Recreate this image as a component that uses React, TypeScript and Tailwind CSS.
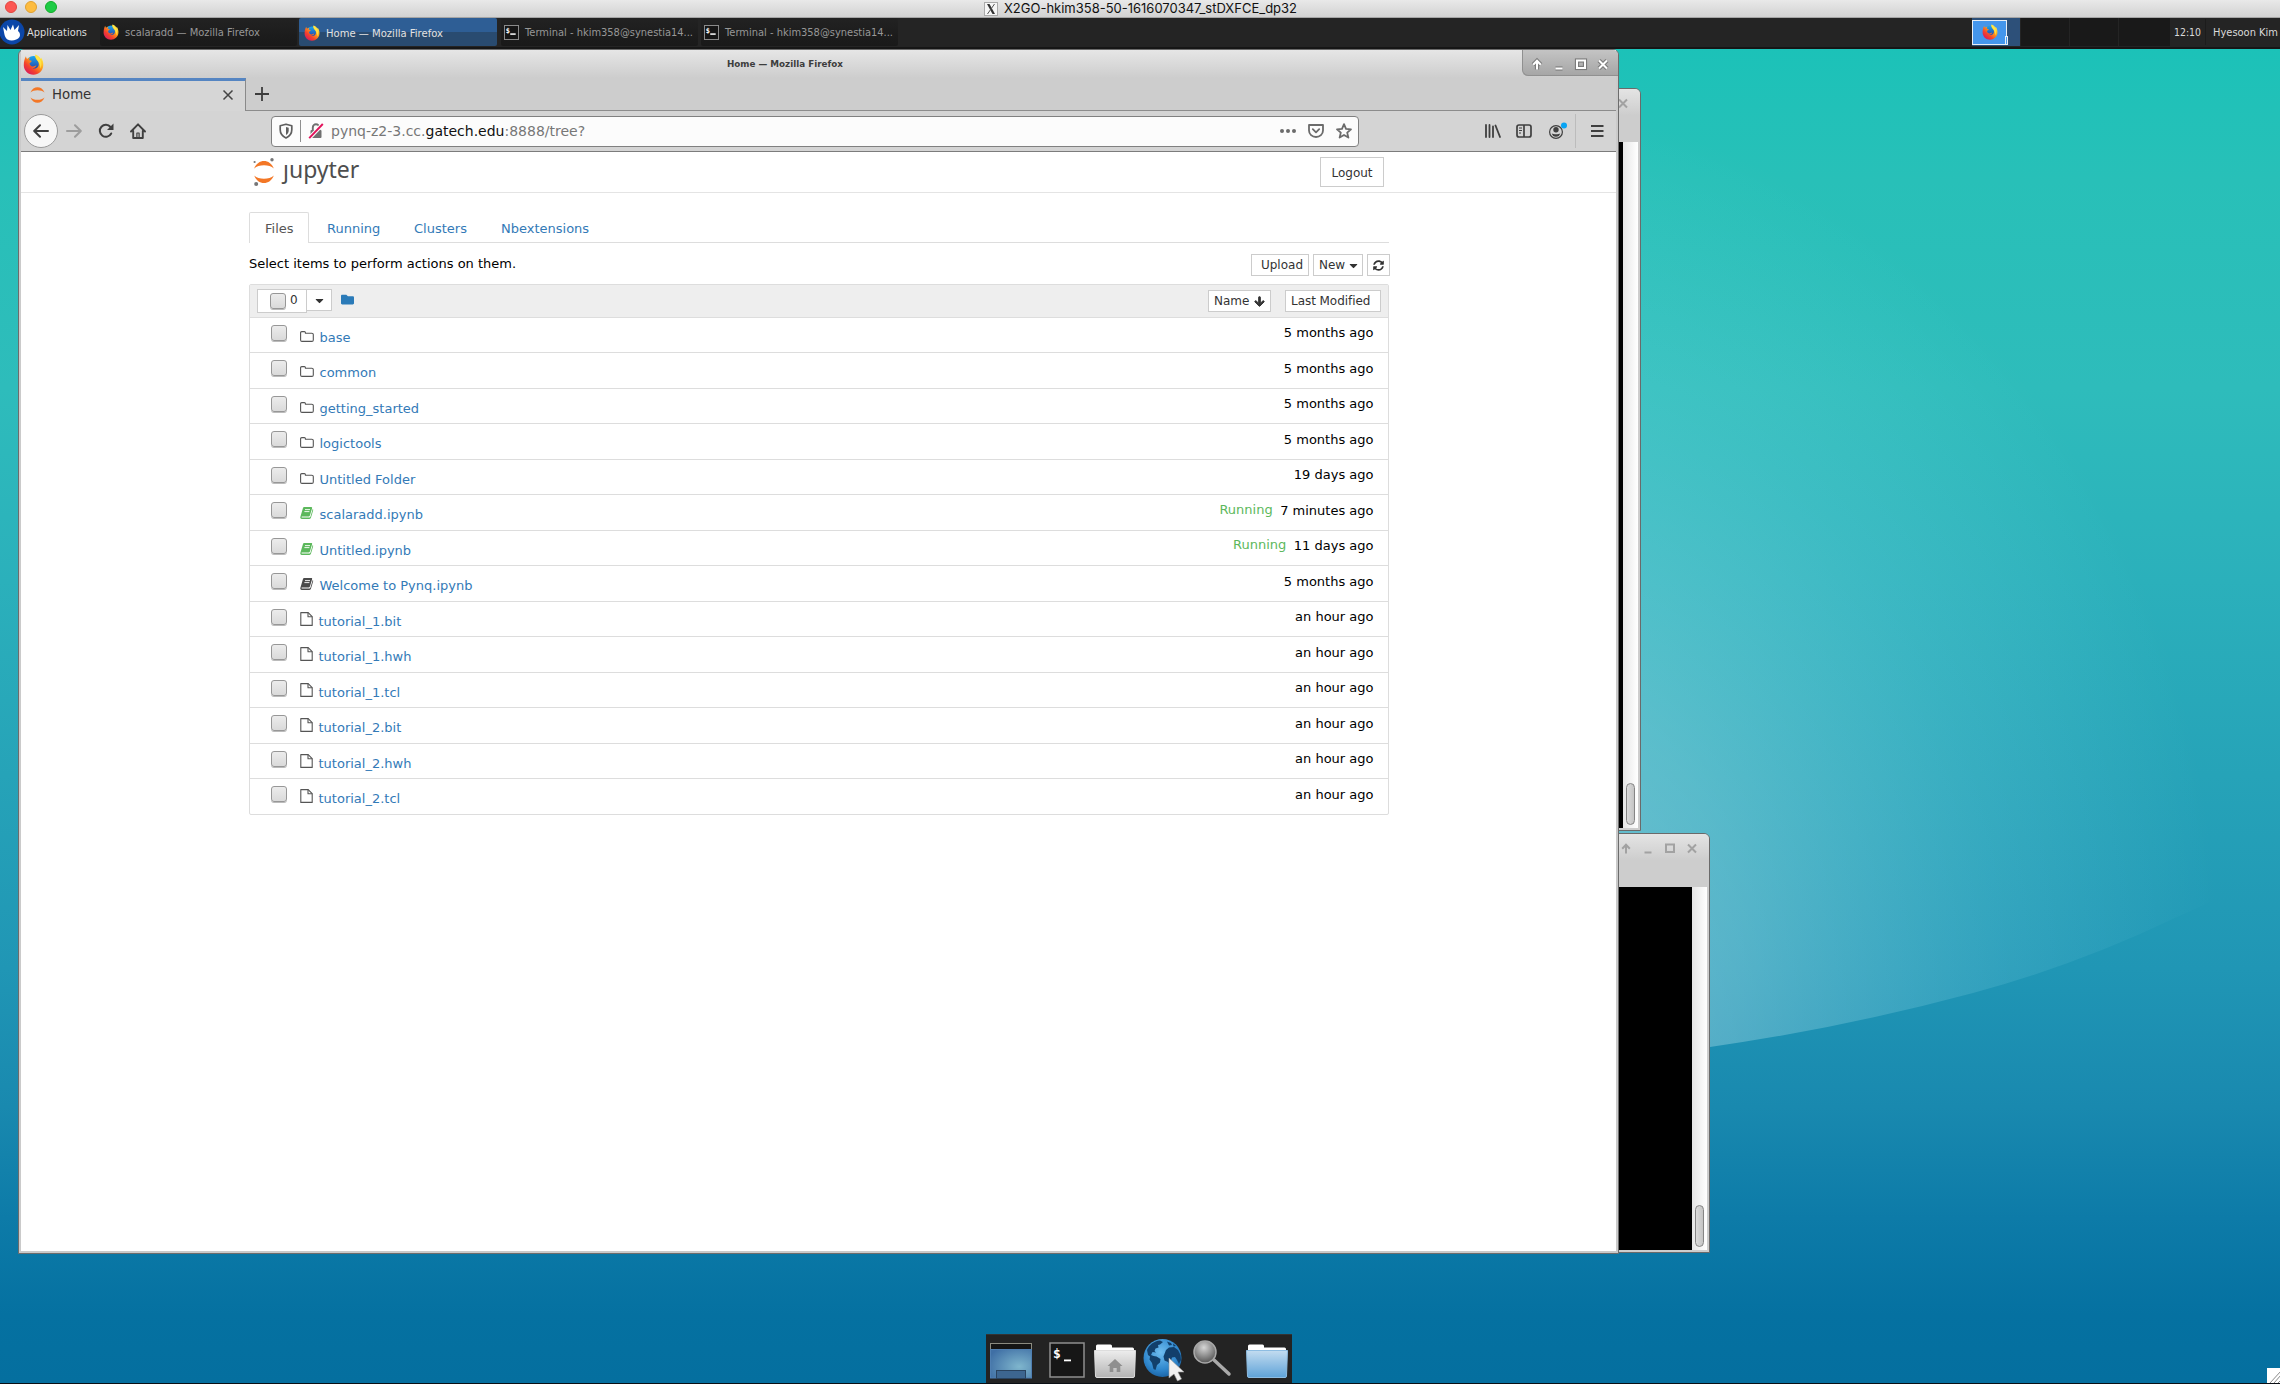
import React from "react";
import { FaFolder, FaArrowDown, FaSyncAlt, FaCaretDown } from "react-icons/fa";

const DEJAVU = "font-['DejaVu_Sans',sans-serif]";

function Firefox({ size }: { size: number }) {
  return (
    <svg width={size} height={size} viewBox="0 0 32 32" className="block shrink-0">
      <defs>
        <linearGradient id="ffBody" x1="0.85" y1="0.1" x2="0.15" y2="0.95">
          <stop offset="0" stopColor="#fff04a" />
          <stop offset="0.35" stopColor="#ffa318" />
          <stop offset="0.68" stopColor="#f4432c" />
          <stop offset="1" stopColor="#d8175f" />
        </linearGradient>
        <linearGradient id="ffGlobe" x1="0.5" y1="0" x2="0.5" y2="1">
          <stop offset="0" stopColor="#19a8f0" />
          <stop offset="1" stopColor="#2a3aa0" />
        </linearGradient>
      </defs>
      <circle cx="16" cy="14" r="11" fill="url(#ffGlobe)" />
      <path
        d="M4.5 3.500c.2 2 .8 3 1.600 4C7.500 6.300 9 5.600 11 5.500c-1.300 1.500-1.700 3-1.500 4 1.400.2 3.500.3 3.800 1.200-.3 1.300-2 2.200-3.300 3.500.1 3 2.500 5 5.500 4.800 2-.1 3.600-1.700 5-1.300-1.200 2.500-3.500 3.800-6 4 5.500 1.500 10-2 9.500-7-.2-2.500-1.500-4-2.500-5C19.500 7 17.800 4 18.800.8c4 1.300 6.500 3.700 8.400 6.700.3-.6.4-1.200.3-2 2.800 4 3.800 8.500 3.300 12.700C30 26 23.800 31.500 16 31.500 7.800 31.500 1.200 25 1.200 17c0-5 1.300-10.500 3.300-13.500z"
        fill="url(#ffBody)"
      />
      <path d="M19 1.500c4 2.500 8 6.500 9 12 .6 3.800-.5 7-2 9 .8-5-.8-9-3.500-12C20.300 8 18.300 5 19 1.500z" fill="#ffe94a" opacity=".85" />
    </svg>
  );
}

function JupyterMark({ w, h, moons }: { w: number; h: number; moons?: boolean }) {
  return (
    <svg width={w} height={h} viewBox="0 0 22 28" className="block shrink-0">
      <path d="M1.200 10.500C3 5.500 7 3 11 3s8 2.500 9.800 7.500C18.500 8.300 15 7.200 11 7.200S3.500 8.300 1.200 10.500z" fill="#f37726" />
      <path d="M1.200 17.500C3 22.500 7 25 11 25s8-2.500 9.800-7.500C18.500 19.700 15 20.800 11 20.800S3.500 19.700 1.200 17.500z" fill="#f37726" />
      {moons && (
        <g fill="#767677">
          <circle cx="19" cy="1.800" r="1.700" />
          <circle cx="1.600" cy="4" r="1.100" />
          <circle cx="3.200" cy="26" r="2" />
        </g>
      )}
    </svg>
  );
}

function TerminalGlyph({ size }: { size: number }) {
  return (
    <svg width={size} height={size} viewBox="0 0 36 36" className="block shrink-0">
      <rect x="1" y="1" width="34" height="34" fill="#161616" stroke="#8f8f8f" strokeWidth={size > 20 ? 1.500 : 2.600} />
      <text x="4" y={size > 20 ? 16 : 18} fontSize={size > 20 ? 13 : 17} fontWeight="bold" fill="#fff" fontFamily="DejaVu Sans Mono, monospace">
        $
      </text>
      <rect x="15" y={size > 20 ? 17.500 : 20} width={size > 20 ? 7 : 13} height={size > 20 ? 1.800 : 3.600} fill="#fff" />
    </svg>
  );
}

function TaskText({ children, width, className = "" }: { children: string; width: number; className?: string }) {
  return (
    <svg width={width} height="16" className={`block shrink-0 overflow-visible ${className}`}>
      <text x="0" y="11.500" textLength={width} lengthAdjust="spacingAndGlyphs" fontSize="10" fill="currentColor" fontFamily="DejaVu Sans, sans-serif">
        {children}
      </text>
    </svg>
  );
}

function WindowButtons({ active }: { active?: boolean }) {
  const c = active ? "#fff" : "#a2a2a2";
  const o = active ? "#7b7b7b" : "transparent";
  return (
    <svg width="88" height="24" viewBox="0 0 88 24" className="block shrink-0" fill="none">
      {[
        { s: o, w: 4.200 },
        { s: c, w: 2 },
      ].map((p, i) => (
        <g key={i} stroke={p.s} strokeWidth={p.w}>
          <path d="M11 17.500v-8M7.200 12.800l3.800-4 3.800 4" />
          <path d="M29.500 16.500h7" />
          <rect x="51" y="8.500" width="8" height="7.500" />
          <path d="M73 8.500l8 8M81 8.500l-8 8" />
        </g>
      ))}
    </svg>
  );
}

function ThumbBar({ className = "" }: { className?: string }) {
  return (
    <div className={`flex w-[15px] items-end justify-center bg-gradient-to-r from-[#e6e6e6] to-white pb-[3px] ${className}`}>
      <div className="h-[42px] w-[9px] rounded-full border border-[#858585] bg-gradient-to-r from-[#dcdcdc] to-[#c4c4c4]" />
    </div>
  );
}

function TerminalWindow({ className }: { className: string }) {
  return (
    <div className={`absolute flex flex-col overflow-hidden rounded-t-[6px] border border-[#6a6a6a] bg-[#cdcdcd] ${className}`}>
      <div className="flex h-[53px] shrink-0 justify-end bg-gradient-to-b from-[#e4e4e4] to-[#cdcdcd] to-50% pt-[2px] pr-[6px]">
        <WindowButtons />
      </div>
      <div className="mr-[2px] mb-[2px] flex flex-1">
        <div className="flex-1 bg-black" />
        <ThumbBar />
      </div>
    </div>
  );
}

function Wallpaper() {
  return (
    <svg width="2280" height="1384" viewBox="0 0 2280 1384" className="absolute inset-0">
      <defs>
        <linearGradient id="sky" x1="0" y1="0" x2="0" y2="1">
          <stop offset="0.03" stopColor="#1bc2b8" />
          <stop offset="0.13" stopColor="#28c0b8" />
          <stop offset="0.28" stopColor="#2ebcbb" />
          <stop offset="0.42" stopColor="#2bb0bb" />
          <stop offset="0.56" stopColor="#26a3b8" />
          <stop offset="0.7" stopColor="#2096b5" />
          <stop offset="0.8" stopColor="#1989af" />
          <stop offset="0.88" stopColor="#0d7ba8" />
          <stop offset="0.95" stopColor="#0571a1" />
          <stop offset="1" stopColor="#056f9f" />
        </linearGradient>
        <radialGradient id="glow" gradientUnits="userSpaceOnUse" cx="0" cy="0" r="1" gradientTransform="translate(1480 960) scale(740 860)">
          <stop offset="0" stopColor="#fff" stopOpacity=".4" />
          <stop offset="0.35" stopColor="#e6ffff" stopOpacity=".27" />
          <stop offset="0.7" stopColor="#b8f8ff" stopOpacity=".12" />
          <stop offset="1" stopColor="#b8f8ff" stopOpacity="0" />
        </radialGradient>
      </defs>
      <rect width="2280" height="1384" fill="url(#sky)" />
      <path d="M0 49H2280V862Q2230 895 2177 917Q2077 965 1973 993Q1843 1028 1710 1047Q1400 1085 0 1085z" fill="url(#glow)" />
    </svg>
  );
}

function TaskButton({ icon, label, width, active, className = "" }: { icon: React.ReactNode; label: string; width: number; active?: boolean; className?: string }) {
  return (
    <div
      className={`flex h-[28px] shrink-0 items-center gap-[6px] rounded-[2px] ${
        active
          ? "w-[198px] bg-gradient-to-b from-[#2e5e95] from-50% to-[#294b70] to-50% pt-px pl-[5px] text-[#e2e2e2]"
          : "w-[197px] bg-gradient-to-b from-[#222] to-[#191919] pl-[3px] text-[#979797]"
      } ${className}`}
    >
      {icon}
      <TaskText width={width}>{label}</TaskText>
    </div>
  );
}

function TopPanel() {
  return (
    <div className="flex h-[31px] items-center border-b-[2px] border-[#161616] bg-[#242424] pb-[1px]">
      <svg width="25" height="26" viewBox="0 0 25 26" className="block shrink-0">
        <circle cx="12" cy="13" r="12.500" fill="#0b46a8" />
        <path d="M3 8l4 4 .5-6 3 5L13 5.500l1.500 5.500L19 6l-1 6c2 1.500 2.500 4 1.500 6-2 3-8 4.500-12 2.500C4 18 4.500 14 3 8z" fill="#fff" />
      </svg>
      <div className="w-[75px] shrink-0 pl-[2px] text-[#dedede]">
        <TaskText width={60}>Applications</TaskText>
      </div>
      <TaskButton icon={<Firefox size={16} />} label="scalaradd — Mozilla Firefox" width={135} />
      <TaskButton className="ml-[2px]" active icon={<Firefox size={16} />} label="Home — Mozilla Firefox" width={117} />
      <TaskButton className="ml-[4px]" icon={<TerminalGlyph size={15} />} label="Terminal - hkim358@synestia14..." width={168} />
      <TaskButton className="ml-[3px]" icon={<TerminalGlyph size={15} />} label="Terminal - hkim358@synestia14..." width={168} />
      <div className="ml-auto flex h-[28px] shrink-0 items-center">
        <div className="flex h-[28px] w-[48px] items-center bg-[#2d5079]">
          <div className="flex h-[25px] w-[35px] items-center justify-center border border-[#e8eef5] bg-[#4496ec]">
            <Firefox size={16} />
          </div>
          <div className="mt-[16px] -ml-[2px] h-[9px] w-[3px] border border-[#e8eef5] bg-[#4496ec]" />
        </div>
        <div className="ml-px h-[28px] w-[48px] bg-[#191919]" />
        <div className="ml-px h-[28px] w-[48px] bg-[#191919]" />
        <div className="ml-px h-[28px] w-[51px] bg-[#191919]" />
        <TaskText className="ml-[4px] text-[#dadada]" width={27}>12:10</TaskText>
        <div className="ml-[4px] h-[26px] w-px bg-[#1c1c1c]" />
        <TaskText className="ml-[7px] mr-[2px] text-[#dadada]" width={65}>Hyesoon Kim</TaskText>
      </div>
    </div>
  );
}

function BrowserTabs() {
  return (
    <div className="flex h-[33px] shrink-0 bg-[#cdcdcd]">
      <div className="flex w-[225px] items-center border-t-[3px] border-r border-t-[#5585c2] border-r-[#8a8a8a] bg-[#d6d6d6] pr-[11px] pb-[2px] pl-[8px] text-[13.3px] text-[#333]">
        <JupyterMark w={17} h={20} />
        <span className="ml-[6px]">Home</span>
        <svg width="12" height="12" viewBox="0 0 12 12" className="ml-auto" stroke="#444" strokeWidth="1.500">
          <path d="M1.500 1.500l9 9M10.500 1.500l-9 9" />
        </svg>
      </div>
      <div className="flex flex-1 items-center border-b border-[#8c8c8c] pl-[9px]">
        <svg width="14" height="14" viewBox="0 0 14 14" stroke="#3c3c3c" strokeWidth="1.800">
          <path d="M7 0v14M0 7h14" />
        </svg>
      </div>
    </div>
  );
}

function NavBar() {
  return (
    <div className="flex h-[41px] shrink-0 items-center border-b border-[#7c7c7c] bg-[#d4d4d4]">
      <div className="ml-[3px] flex size-[34px] items-center justify-center rounded-full border border-[#9a9a9a] bg-[#f7f7f7]">
        <svg width="16" height="14" viewBox="0 0 16 14" fill="none" stroke="#3f3f3f" strokeWidth="2" strokeLinecap="round" strokeLinejoin="round">
          <path d="M15 7H1.500M7 1.200L1.200 7 7 12.800" />
        </svg>
      </div>
      <svg width="16" height="14" viewBox="0 0 16 14" className="ml-[8px]" fill="none" stroke="#9d9d9d" strokeWidth="2" strokeLinecap="round" strokeLinejoin="round">
        <path d="M1 7h13.500M9 1.200L14.800 7 9 12.800" />
      </svg>
      <svg width="16" height="16" viewBox="0 0 16 16" className="ml-[16px]" fill="none" stroke="#3f3f3f" strokeWidth="2">
        <path d="M13.200 10.500A6 6 0 1 1 12.500 4" strokeLinecap="round" />
        <path d="M15.500 0.500v6.500h-6.500z" fill="#3f3f3f" stroke="none" />
      </svg>
      <svg width="16" height="16" viewBox="0 0 16 16" className="ml-[16px]" fill="none" stroke="#3f3f3f" strokeWidth="1.900" strokeLinejoin="round" strokeLinecap="round">
        <path d="M1 8.500L8 1.300l7 7.200M3.200 8v7h9.600V8" />
        <path d="M6.900 14.500V10h2.200v4.500z" strokeWidth="1.200" />
      </svg>
      <div className="ml-[125px] flex h-[31px] w-[1088px] items-center rounded-[4px] border border-[#808080] bg-[#fcfcfc] pr-[6px] pl-[7px]">
        <svg width="14" height="16" viewBox="0 0 14 16" fill="none" stroke="#5f5f5f" strokeWidth="1.700">
          <path d="M7 1.200l5.800 1.500v4c0 4-2.300 6.500-5.800 8.300-3.500-1.800-5.800-4.300-5.800-8.300v-4z" strokeLinejoin="round" />
          <path d="M7 4v8c1.500-1 2.700-2.300 2.700-4.800V4.700z" fill="#5f5f5f" stroke="none" />
        </svg>
        <div className="ml-[7px] h-[22px] w-px bg-[#8f8f8f]" />
        <svg width="16" height="16" viewBox="0 0 16 16" className="ml-[7px]" fill="none">
          <rect x="2.500" y="7" width="11" height="8" rx="1" fill="#707070" />
          <path d="M4.800 7V4.500a3.200 3.200 0 0 1 6.400 0V7" stroke="#707070" strokeWidth="1.900" />
          <path d="M1.200 15.200L14.800 1" stroke="#fcfcfc" strokeWidth="4" />
          <path d="M1.200 15.200L14.800 1" stroke="#e2125a" strokeWidth="1.900" />
        </svg>
        <span className="ml-[7px] text-[14px] whitespace-pre text-[#777]">
          pynq-z2-3.cc.<span className="text-[#111]">gatech.edu</span>:8888/tree?
        </span>
        <svg width="16" height="4" viewBox="0 0 16 4" className="ml-auto" fill="#6b6b6b">
          <circle cx="2" cy="2" r="2" />
          <circle cx="8" cy="2" r="2" />
          <circle cx="14" cy="2" r="2" />
        </svg>
        <svg width="16" height="14" viewBox="0 0 16 14" className="ml-[12px]" fill="none" stroke="#6b6b6b" strokeWidth="1.800" strokeLinecap="round" strokeLinejoin="round">
          <path d="M1 1h14v5.500a7 6.500 0 0 1-14 0z" />
          <path d="M4.800 5.200L8 8.300l3.200-3.100" />
        </svg>
        <svg width="16" height="16" viewBox="0 0 16 16" className="ml-[12px]" fill="none" stroke="#6b6b6b" strokeWidth="1.800" strokeLinejoin="round">
          <path d="M8 1.200l2 4.700 5 .4-3.800 3.300 1.200 5L8 11.900l-4.400 2.700 1.200-5L1 6.300l5-.4z" />
        </svg>
      </div>
      <svg width="16" height="14" viewBox="0 0 16 14" className="ml-[126px]" stroke="#3f3f3f" strokeWidth="1.800" strokeLinecap="round">
        <path d="M1 1v12M4.500 1v12M8 2.500V13M10.500 1.500L15 13" />
      </svg>
      <svg width="16" height="14" viewBox="0 0 16 14" className="ml-[15px]" fill="none" stroke="#3f3f3f" strokeWidth="1.700">
        <rect x="1" y="1" width="14" height="12" rx="2" />
        <path d="M8 1v12" />
        <path d="M3 4h3M3 6.500h3M3 9h2" strokeWidth="1" />
      </svg>
      <svg width="19" height="18" viewBox="0 0 19 18" className="ml-[17px]" fill="none">
        <circle cx="7" cy="10" r="6.400" stroke="#3f3f3f" strokeWidth="1.200" />
        <circle cx="7" cy="7.800" r="2.700" fill="#3f3f3f" />
        <path d="M2.800 11.500c1.600.9 6.800.9 8.400 0-.5 2-2 3.300-4.200 3.300s-3.700-1.300-4.200-3.300z" fill="#3f3f3f" />
        <circle cx="15" cy="3.500" r="3" fill="#08a4f4" />
      </svg>
      <div className="ml-[7px] h-[34px] w-px bg-[#bcbcbc]" />
      <svg width="13" height="12" viewBox="0 0 13 12" className="ml-[15px]" stroke="#3f3f3f" strokeWidth="1.800">
        <path d="M0 1h12.500M0 6h12.500M0 11h12.500" />
      </svg>
    </div>
  );
}

const btn = "flex items-center border border-[#ccc] bg-white text-[12px] text-[#333]";

function Checkbox() {
  return <div className="size-[16px] shrink-0 rounded-[3px] border border-[#979797] bg-gradient-to-b from-[#ececec] to-[#dadada] shadow-[0_1px_0_#bbb]" />;
}

function FolderOutline() {
  return (
    <svg width="14" height="11" viewBox="0 0 14 11" className="mt-[13px] block" fill="none" stroke="#555" strokeWidth="1.100" strokeLinejoin="round">
      <path d="M.6 9V1.800C.6 1 1 .6 1.800.6h2.600c.7 0 1 .4 1 1v.6h6.400c.8 0 1.500.5 1.500 1.300V9c0 .8-.5 1.400-1.400 1.400H2C1.100 10.400.6 9.800.6 9z" />
    </svg>
  );
}

function NotebookGlyph({ green }: { green?: boolean }) {
  return (
    <svg width="14" height="12" viewBox="0 0 14 12" className="mt-[12px] block" fill={green ? "#5cb85c" : "#4a4a4a"}>
      <path d="M4.300 0h6.900c.8 0 1.100.5.900 1.200L9.900 8.600c-.2.600-.7.900-1.300.9H2c-.5 0-.6.600-.2.900h7.500c.6 0 1-.3 1.200-.9L12.700 2c.5.300.6.800.4 1.400l-2.100 7.200c-.2.800-.8 1.300-1.600 1.300H1.800C.6 11.900 0 11 .4 9.800L2.900 1.300C3.200.4 3.600 0 4.300 0z" />
      <path d="M5 2.600h5M4.400 4.600h5" stroke="#fff" strokeWidth=".9" />
    </svg>
  );
}

function FileOutline() {
  return (
    <svg width="13" height="14" viewBox="0 0 13 14" className="mt-[10px] block" fill="none" stroke="#555" strokeWidth="1.100" strokeLinejoin="round">
      <path d="M.8.6h7.400l4 4v8.800H.8z" />
      <path d="M8 .6v4.200h4.200" />
    </svg>
  );
}

type Kind = "folder" | "live" | "notebook" | "file";
const items: { name: string; kind: Kind; time: string }[] = [
  { name: "base", kind: "folder", time: "5 months ago" },
  { name: "common", kind: "folder", time: "5 months ago" },
  { name: "getting_started", kind: "folder", time: "5 months ago" },
  { name: "logictools", kind: "folder", time: "5 months ago" },
  { name: "Untitled Folder", kind: "folder", time: "19 days ago" },
  { name: "scalaradd.ipynb", kind: "live", time: "7 minutes ago" },
  { name: "Untitled.ipynb", kind: "live", time: "11 days ago" },
  { name: "Welcome to Pynq.ipynb", kind: "notebook", time: "5 months ago" },
  { name: "tutorial_1.bit", kind: "file", time: "an hour ago" },
  { name: "tutorial_1.hwh", kind: "file", time: "an hour ago" },
  { name: "tutorial_1.tcl", kind: "file", time: "an hour ago" },
  { name: "tutorial_2.bit", kind: "file", time: "an hour ago" },
  { name: "tutorial_2.hwh", kind: "file", time: "an hour ago" },
  { name: "tutorial_2.tcl", kind: "file", time: "an hour ago" },
];

function FileList() {
  return (
    <div className="mt-[7px] w-[1140px] rounded-[2px] border border-[#ddd] text-[13px] leading-[17px]">
      <div className="flex h-[33px] items-start border-b border-[#ddd] bg-[#eee] pt-[4px] pl-[7px]">
        <div className={`${btn} h-[24px] w-[50px] pl-[12px]`}>
          <Checkbox />
          <span className="ml-[4px] mb-[2px]">0</span>
        </div>
        <div className={`${btn} -ml-px h-[22px] w-[26px] justify-center`}>
          <FaCaretDown size={13} />
        </div>
        <FaFolder size={13} color="#2a7ab8" className="mt-[4px] ml-[9px]" />
        <div className={`${btn} mt-px ml-auto h-[22px] w-[63px] justify-between px-[5px]`}>
          Name
          <FaArrowDown size={11} stroke="currentColor" strokeWidth={45} />
        </div>
        <div className={`${btn} mt-px mr-[7px] ml-[14px] h-[22px] w-[96px] pl-[5px] tracking-[-0.05px]`}>Last Modified</div>
      </div>
      {items.map((it, i) => {
        const last = i === items.length - 1;
        return (
          <div key={it.name} className={`flex items-start pr-[14.500px] pl-[21px] ${i % 2 && !last ? "h-[36px]" : "h-[35px]"} ${last ? "" : "border-b border-[#ddd]"}`}>
            <div className={i % 2 ? "mt-[7px]" : "mt-[6.500px]"}>
              <Checkbox />
            </div>
            <div className="ml-[13px] w-[14px]">
              {it.kind === "folder" && <FolderOutline />}
              {it.kind === "live" && <NotebookGlyph green />}
              {it.kind === "notebook" && <NotebookGlyph />}
              {it.kind === "file" && <FileOutline />}
            </div>
            <a className={`mt-[11px] text-[#337ab7] ${it.kind === "file" ? "ml-[4.500px]" : "ml-[5.500px]"}`}>{it.name}</a>
            {it.kind === "live" && <span className={`ml-auto text-[#5cb85c] ${i % 2 ? "mt-[6px]" : "mt-[5px]"}`}>Running</span>}
            <span className={`text-black ${i % 2 ? "mt-[7px]" : "mt-[6px]"} ${it.kind === "live" ? "ml-[7.500px]" : "ml-auto"}`}>{it.time}</span>
          </div>
        );
      })}
    </div>
  );
}

function JupyterPage() {
  return (
    <div className="flex flex-1 flex-col bg-white">
      <div className="flex h-[41px] shrink-0 items-start border-b border-[#e4e4e4] pl-[232px]">
        <div className="mt-[6px]">
          <JupyterMark w={22} h={28} moons />
        </div>
        <div className="relative mt-[2px] ml-[8px] font-['Noto_Sans',sans-serif] text-[23px] leading-[30px] text-[#4e4e4e]">
          jupyter
          <span className="absolute top-0 left-0 h-[10px] w-[6px] bg-white" />
        </div>
        <div className={`${btn} mt-[5px] mr-[232px] ml-auto h-[30px] w-[64px] justify-center pt-px`}>Logout</div>
      </div>
      <div className="ml-[228px] w-[1141px]">
        <div className="mt-[19px] flex h-[31px] w-[1140px] items-stretch text-[13px] leading-[33px] text-[#337ab7]">
          <div className="w-[60px] rounded-t-[2px] border border-b-0 border-[#ddd] pl-[15px] leading-[31px] text-[#555]">Files</div>
          <div className="flex flex-1 border-b border-[#ddd]">
            <span className="ml-[18px] w-[87px]">Running</span>
            <span className="w-[87px]">Clusters</span>
            <span>Nbextensions</span>
          </div>
        </div>
        <div className="mt-[11px] flex h-[23px] items-start text-[13px] leading-[20px] text-black">
          <span>Select items to perform actions on them.</span>
          <div className={`${btn} ml-auto h-[22px] w-[58px] justify-end pr-[5px]`}>Upload</div>
          <div className={`${btn} ml-[4px] h-[22px] w-[50px] pl-[5px]`}>
            New
            <FaCaretDown size={13} className="ml-[2px]" />
          </div>
          <div className={`${btn} ml-[4px] h-[22px] w-[23px] justify-center`}>
            <FaSyncAlt size={11} />
          </div>
        </div>
        <FileList />
      </div>
    </div>
  );
}

function Browser() {
  return (
    <div className="absolute top-[49px] left-[18px] flex h-[1205px] w-[1601px] flex-col rounded-t-[6px] border border-[#6c6c6c] bg-[#cacaca] pr-[2px] pb-[2px] pl-[2px]">
      <div className="flex h-[28px] shrink-0 items-start bg-gradient-to-b from-[#e6e6e6] to-[#cdcdcd]">
        <div className="mt-[4px] ml-[2px]">
          <Firefox size={21} />
        </div>
        <svg width="117" height="16" className="mt-[6px] ml-[683px] overflow-visible">
          <text x="0" y="11" textLength="116" lengthAdjust="spacingAndGlyphs" fontSize="9" fontWeight="bold" fill="#3d3d3d" fontFamily="DejaVu Sans, sans-serif">
            Home — Mozilla Firefox
          </text>
        </svg>
        <div className="-mr-[2px] ml-auto h-[26px] w-[96px] rounded-tr-[5px] rounded-bl-[6px] border-b border-l border-[#909090] bg-gradient-to-b from-[#c4c4c4] to-[#a6a6a6] pt-[2px] pl-[3px]">
          <WindowButtons active />
        </div>
      </div>
      <BrowserTabs />
      <NavBar />
      <JupyterPage />
    </div>
  );
}

function FolderBig({ home }: { home?: boolean }) {
  return (
    <svg width="42" height="34" viewBox="0 0 42 34" className="block">
      <defs>
        <linearGradient id="fGrey" x1="0" y1="0" x2="0" y2="1">
          <stop offset="0" stopColor="#ededed" />
          <stop offset="1" stopColor="#b4b4b4" />
        </linearGradient>
        <linearGradient id="fBlue" x1="0" y1="0" x2="0" y2="1">
          <stop offset="0" stopColor="#c3dcf0" />
          <stop offset="1" stopColor="#5fa3d8" />
        </linearGradient>
      </defs>
      <path d="M2 10V2q0-1.500 1.500-1.500h13Q18 .5 18 2v1.500h20.500Q40 3.500 40 5v5z" fill="#fff" />
      <path d="M.5 6.500h41L40.500 32q0 1.500-1.500 1.500H3Q1.500 33.500 1.500 32z" fill={home ? "url(#fGrey)" : "url(#fBlue)"} stroke={home ? "#ddd" : "#8ebde2"} />
      {home && <path d="M21 15l7.500 7h-2.200v6h-3.600v-4h-3.400v4h-3.600v-6h-2.200z" fill="#8f8f8f" />}
    </svg>
  );
}

function Dock() {
  return (
    <div className="absolute top-[1334px] left-[986px] flex h-[49px] w-[306px] items-center border-t border-[#333] bg-[#232323] pt-[3px] pl-[4px]">
      <svg width="42" height="36" viewBox="0 0 42 36">
        <defs>
          <radialGradient id="desk" cx="0.7" cy="0.6" r="0.8">
            <stop offset="0" stopColor="#7fb6cd" />
            <stop offset="1" stopColor="#3f6fa5" />
          </radialGradient>
        </defs>
        <rect x="0.500" y="0.500" width="41" height="34" fill="#151515" stroke="#8b8b80" />
        <rect x="0.500" y="6.500" width="41" height="28.500" fill="url(#desk)" stroke="#4f7fb2" />
        <rect x="6.500" y="27.500" width="29" height="8" fill="#3d6690" stroke="#29435f" />
      </svg>
      <div className="ml-[17px] -mt-[2px]">
        <TerminalGlyph size={36} />
      </div>
      <div className="ml-[9px]">
        <FolderBig home />
      </div>
      <svg width="42" height="44" viewBox="0 0 42 44" className="-mt-[2px] ml-[7px] block">
        <defs>
          <radialGradient id="earth" cx="0.45" cy="0.35" r="0.65">
            <stop offset="0" stopColor="#6fbdf0" />
            <stop offset="0.7" stopColor="#2f87cd" />
            <stop offset="1" stopColor="#1c66a8" />
          </radialGradient>
        </defs>
        <circle cx="19.500" cy="20" r="19" fill="url(#earth)" />
        <path
          d="M4 12C6 7 11 3 17 2.500l3 1.500-3 2.500-2 .5.500 2.500-3 1-1 2.500 1.500 1.500-3.500-.5-1.500 3 2.500 1 3 .5 4 2.500-.5 3.500-3 2.500-1.500 5-2-1-1.500-6-2.500-3.500.5-3L5 17zM24 3.500l4 1.500 1 2-3 .5zM23 12l3-2.500 5-.5 4 3 2.500 5 .5 5-2 4-2-4-2-3-3 .5-1 3 2 3-2 3.500-3-5-3.500-1.500-1-4zM30 5.500l3 2.500-2.500.5z"
          fill="#123f6b"
        />
        <path d="M26 20v20l5-4 3.500 7 4-2-3.500-7h6z" fill="#f1f1f1" stroke="#999" strokeWidth=".6" />
      </svg>
      <svg width="42" height="38" viewBox="0 0 42 38" className="-mt-[3px] ml-[7px] block">
        <defs>
          <radialGradient id="lens" cx="0.45" cy="0.3" r="0.7">
            <stop offset="0" stopColor="#d6d6d6" />
            <stop offset="1" stopColor="#555" />
          </radialGradient>
        </defs>
        <path d="M22 20L37 34" stroke="#a9a9a9" strokeWidth="3.500" strokeLinecap="round" />
        <circle cx="13" cy="12" r="11" fill="url(#lens)" stroke="#a8a8a8" strokeWidth="1.500" />
      </svg>
      <div className="ml-[12px]">
        <FolderBig />
      </div>
    </div>
  );
}

export default function App() {
  return (
    <div className={`relative h-[1384px] w-[2280px] overflow-hidden ${DEJAVU}`}>
      <Wallpaper />
      <div className="relative">
        <div className="relative flex h-[18px] items-center justify-center border-b border-[#a5a5a5] bg-gradient-to-b from-[#e9e9e9] to-[#d2d2d2]">
          <div className="absolute left-[5px] top-[1px] flex gap-[8px]">
            <div className="size-[12px] rounded-full border border-[#e2463f] bg-[#fc5753]" />
            <div className="size-[12px] rounded-full border border-[#e0a030] bg-[#fdbc40]" />
            <div className="size-[12px] rounded-full border border-[#12ac28] bg-[#1ecb45]" />
          </div>
          <svg width="14" height="14" viewBox="0 0 14 14" className="mr-[6px]">
            <rect x="0.500" y="0.500" width="13" height="13" fill="#f6f6f6" stroke="#aaa" />
            <path d="M3 2h2.500L11 12H8.500z" fill="#333" />
            <path d="M10.500 2L3.500 12" stroke="#555" strokeWidth="1" />
          </svg>
          <svg width="292" height="16" className="overflow-visible">
            <text x="0" y="12" textLength="293" lengthAdjust="spacingAndGlyphs" fontSize="13" fill="#111" fontFamily="Inter, sans-serif">
              X2GO-hkim358-50-1616070347_stDXFCE_dp32
            </text>
          </svg>
        </div>
        <TopPanel />
      </div>
      <TerminalWindow className="top-[88px] left-[840px] h-[743px] w-[801px]" />
      <TerminalWindow className="top-[833px] left-[909px] h-[420px] w-[801px]" />
      <Browser />
      <Dock />
      <svg width="13" height="15" viewBox="0 0 13 15" className="absolute top-[1368px] left-[2267px] bg-white" stroke="#8a8a8a">
        <path d="M3 15L14 3M7 15l7-8M11 15l3-3" />
      </svg>
      <div className="absolute bottom-0 left-0 h-px w-full bg-[#0a0f14]" />
    </div>
  );
}
